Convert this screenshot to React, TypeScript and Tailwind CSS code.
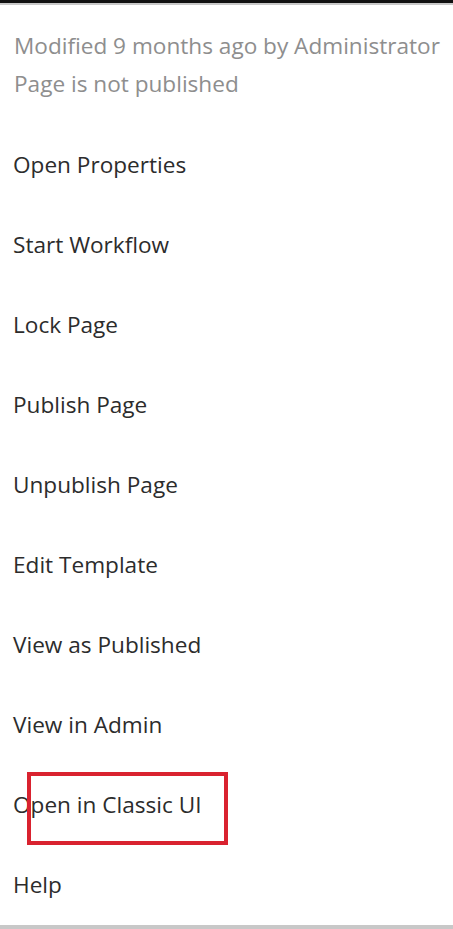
import React from "react";

const items = [
  "Open Properties",
  "Start Workflow",
  "Lock Page",
  "Publish Page",
  "Unpublish Page",
  "Edit Template",
  "View as Published",
  "View in Admin",
  "Open in Classic UI",
  "Help",
];

export default function App() {
  return (
    <div
      className="w-[453px] h-[929px] bg-white overflow-hidden flex flex-col"
      style={{ fontFamily: '"Open Sans", "Liberation Sans", sans-serif' }}
    >
      <div className="h-[3px] bg-[#111111]" />
      <div className="h-[3px] bg-[#c8c8c8]" />
      <div className="pl-[14px] pt-[22px] pb-[22px] text-[#8e8e8e] text-[22.6px] leading-[38px]">
        <div>Modified 9 months ago by Administrator</div>
        <div>Page is not published</div>
      </div>
      <div className="flex flex-col">
        {items.map((it) => (
          <div
            key={it}
            className="relative h-[80px] flex items-center pl-[13px] text-[22.6px] text-[#2c2c2c]"
          >
            <span>{it}</span>
            {it === "Open in Classic UI" && (
              <div className="absolute left-[27px] top-[7px] w-[201px] h-[73px] border-[4px] border-[#d9222f]" />
            )}
          </div>
        ))}
      </div>
      <div className="h-[4px] bg-[#c8c8c8]" />
    </div>
  );
}
